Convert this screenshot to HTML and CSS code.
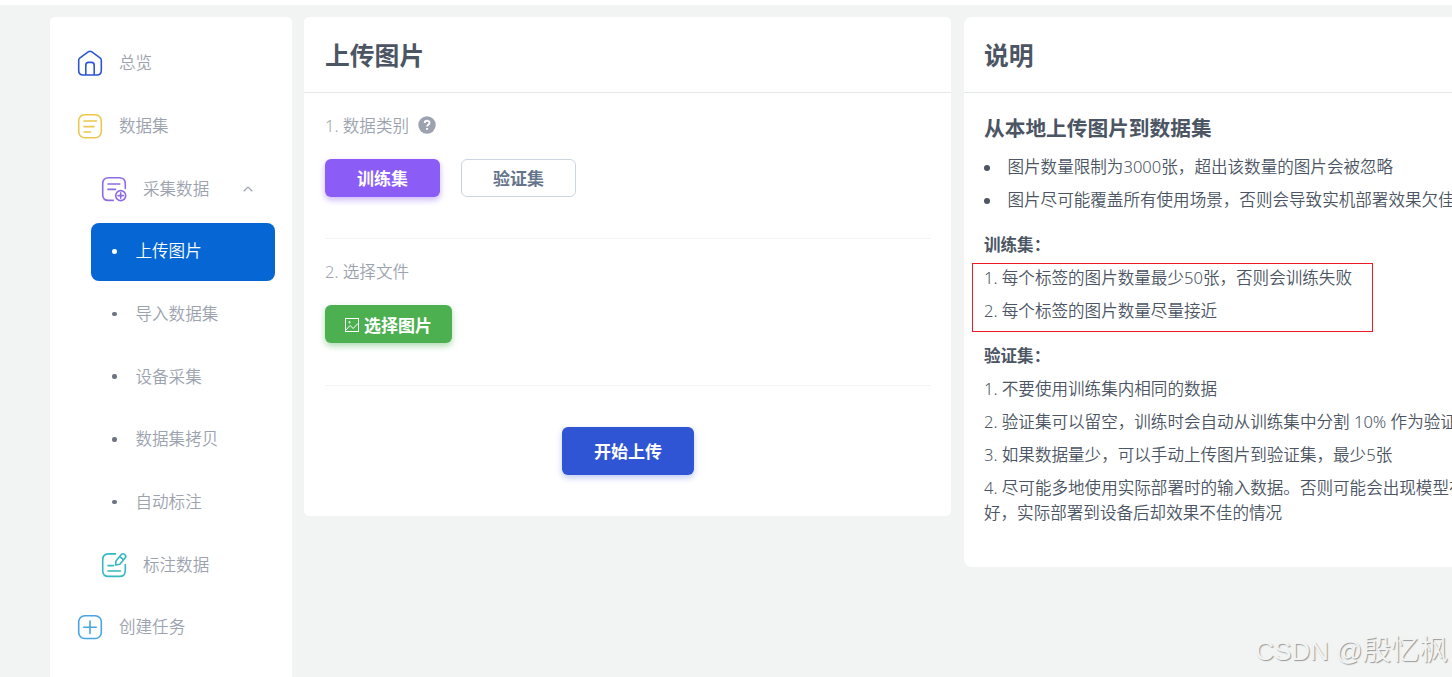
FILE: index.html
```html
<!DOCTYPE html>
<html lang="zh-CN">

<head>
	<meta charset="utf-8">
	<title>上传图片</title>
	<meta name="viewport" content="width=device-width, initial-scale=1">
	<link rel="stylesheet" href="styles.css">
</head>

<body>
	<div class="page">
		<nav class="sidebar">
			<a class="item">
				<svg class="icon home" viewBox="0 0 26 26"><path d="M1.7 10.2Q1.7 9 2.7 8.2L11.5 1.7Q13 .8 14.5 1.7L23.3 8.2Q24.3 9 24.3 10.2V20.5Q24.3 25 19.8 25H6.2Q1.7 25 1.7 20.5ZM8.8 25V15.2Q8.8 12.4 11.5 12.4H14.5Q17.2 12.4 17.2 15.2V25" /></svg>
				<span>总览</span>
			</a>
			<a class="item">
				<svg class="icon data" viewBox="0 0 26 26"><rect x="1.7" y="1.7" width="22.6" height="23" rx="6" /><path d="M7 8H19.5M7 13.6H17M7 19H13.5" /></svg>
				<span>数据集</span>
			</a>
			<a class="item sub">
				<svg class="icon collect" viewBox="0 0 26 26"><path d="M12.2 24.4H7.7Q1.7 24.4 1.7 18.4V7.7Q1.7 1.7 7.7 1.7H18.3Q24.3 1.7 24.3 7.7V12.5M7 8H18.8M7 13.4H14.5" /><circle cx="19.7" cy="19.6" r="5" /><path d="M17 19.6H22.4M19.7 16.9V22.3" /></svg>
				<span>采集数据</span>
				<svg class="arrow" viewBox="0 0 10 6"><path d="M.7 5.2 5 1 9.3 5.2" /></svg>
			</a>
			<a class="item leaf active"><i class="dot"></i><span>上传图片</span></a>
			<a class="item leaf"><i class="dot"></i><span>导入数据集</span></a>
			<a class="item leaf"><i class="dot"></i><span>设备采集</span></a>
			<a class="item leaf"><i class="dot"></i><span>数据集拷贝</span></a>
			<a class="item leaf"><i class="dot"></i><span>自动标注</span></a>
			<a class="item sub">
				<svg class="icon label" viewBox="0 0 26 26"><path d="M14.5 1.9H7.7Q1.7 1.9 1.7 7.9V18.4Q1.7 24.4 7.7 24.4H18.3Q24.3 24.4 24.3 18.4V12.5M7 13.6H12.5M7 19H19.5" /><path d="M14.6 13 15 9 20.3 2.5Q21.6 1 23.5 2.4 25.6 4.1 24.3 5.8L18.9 12.2ZM18.8 4.7 22.3 7.7" /></svg>
				<span>标注数据</span>
			</a>
			<a class="item">
				<svg class="icon task" viewBox="0 0 26 26"><rect x="1.7" y="1.7" width="22.6" height="22.8" rx="6" /><path d="M13 7V19.5M6.7 13.3H19.3" /></svg>
				<span>创建任务</span>
			</a>
		</nav>

		<main class="card upload">
			<h1>上传图片</h1>
			<div class="content">
				<section class="step">
					<div class="step-name">1. 数据类别
						<svg class="help" viewBox="0 0 18 18"><circle cx="9" cy="9" r="8.7" /><path d="M6.7 7.1C6.7 3.9 11.5 4 11.5 6.9 11.5 8.8 9.1 8.7 9.1 10.6M9.1 12.1V13.8" /></svg>
					</div>
					<div class="buttons">
						<button class="btn purple">训练集</button>
						<button class="btn outline">验证集</button>
					</div>
				</section>
				<section class="step">
					<div class="step-name">2. 选择文件</div>
					<div class="buttons">
						<button class="btn green">
							<svg class="picture" viewBox="0 0 14 14"><rect x=".5" y=".5" width="13" height="13" /><path d="M1 12 5 7.5 8.2 10.5 12.9 5.5" /><circle cx="4.5" cy="4.2" r=".7" /></svg>
							选择图片
						</button>
					</div>
				</section>
				<div class="submit">
					<button class="btn blue">开始上传</button>
				</div>
			</div>
		</main>

		<aside class="card help-card">
			<h1>说明</h1>
			<div class="content">
				<h2>从本地上传图片到数据集</h2>
				<ul>
					<li>图片数量限制为3000张，超出该数量的图片会被忽略</li>
					<li>图片尽可能覆盖所有使用场景，否则会导致实机部署效果欠佳</li>
				</ul>
				<h3>训练集：</h3>
				<div class="marked">
					<p>1. 每个标签的图片数量最少50张，否则会训练失败</p>
					<p>2. 每个标签的图片数量尽量接近</p>
				</div>
				<h3>验证集：</h3>
				<p>1. 不要使用训练集内相同的数据</p>
				<p>2. 验证集可以留空，训练时会自动从训练集中分割 10% 作为验证</p>
				<p>3. 如果数据量少，可以手动上传图片到验证集，最少5张</p>
				<p>4. 尽可能多地使用实际部署时的输入数据。否则可能会出现模型在<br>好，实际部署到设备后却效果不佳的情况</p>
			</div>
		</aside>
	</div>
	<div class="watermark"><span>CSDN @</span>殷忆枫</div>
</body>

</html>
```

FILE: styles.css
```css
* {
	box-sizing: border-box;
}

body {
	margin: 0;
	height: 677px;
	overflow: hidden;
	position: relative;
	border-top: 5px solid white;
	background: #f2f4f4;
	color: #4b5563;
	font-family: "Noto Sans", "Noto Sans CJK SC", sans-serif;
	font-size: 16.57px;
	font-weight: 350;
}

.page {
	display: grid;
	grid-template-columns: 242px 647px 1fr;
	column-gap: 12px;
	align-items: start;
	padding: 12px 0 0 50px;
}

/* sidebar */
.sidebar {
	height: 680px;
	padding: 18px 17px 0 27px;
	display: flex;
	flex-direction: column;
	gap: 4.7px;
	background: white;
	border-radius: 5px 5px 0 0;
	color: #9ca3af;
}

.item {
	height: 58px;
	padding-bottom: 1.5px;
	flex: none;
	display: flex;
	align-items: center;
	gap: 16px;
}

.item span {
	line-height: 24px;
}

.sub {
	padding-left: 24px;
}

.leaf {
	margin-left: 14px;
	padding-left: 21px;
	gap: 19px;
	border-radius: 8px;
}

.active {
	background: #0666d3;
	color: white;
}

.dot {
	width: 4.5px;
	height: 4.5px;
	border-radius: 50%;
	background: #6b7280;
}

.active .dot {
	background: white;
}

svg {
	fill: none;
	stroke: currentColor;
	flex: none;
}

.icon {
	width: 26px;
	height: 26px;
	stroke-width: 1.6;
	stroke-linecap: round;
	stroke-linejoin: round;
}

.home {
	color: #2f55d4;
}

.data {
	color: #e9c84b;
}

.collect {
	color: #8e6be0;
}

.label {
	color: #35b8c0;
}

.task {
	color: #46a5e5;
}

.arrow {
	width: 10px;
	height: 6px;
	margin-left: 18px;
	stroke-width: 1.2;
}

/* cards */
.card {
	background: white;
	border-radius: 5px;
}

h1 {
	margin: 0;
	height: 76px;
	padding: 0 21px;
	border-bottom: 1px solid #e5e7eb;
	font-size: 24.8px;
	font-weight: 700;
	line-height: 76px;
}

.upload {
	height: 499px;
}

.upload .content {
	padding: 0 20px 0 21px;
}

.step {
	height: 147px;
	padding-top: 19px;
	border-bottom: 1px solid #f3f4f6;
}

.step:first-child {
	height: 146px;
}

.step-name {
	display: flex;
	align-items: center;
	gap: 8.5px;
	height: 25px;
	color: #9ca3af;
}

.help {
	width: 18px;
	height: 18px;
	margin-top: 1px;
	stroke: white;
	stroke-width: 1.9;
}

.help circle {
	fill: #9ca3af;
	stroke: none;
}

.buttons {
	display: flex;
	gap: 21px;
	padding-top: 22px;
}

.btn {
	width: 115px;
	height: 38px;
	padding: 0 0 2px;
	display: flex;
	align-items: center;
	justify-content: center;
	gap: 5px;
	border: none;
	border-radius: 6px;
	color: white;
	font-family: inherit;
	font-size: 17px;
	font-weight: 700;
}

.purple {
	background: #8b5cf6;
	box-shadow: 0 3px 6px rgba(139, 92, 246, .45);
}

.outline {
	background: white;
	border: 1px solid #cbd5e1;
	color: #64748b;
}

.green {
	width: 127px;
	padding: 0;
	background: #4caf50;
	box-shadow: 0 3px 6px rgba(76, 175, 80, .45);
}

.picture {
	width: 14px;
	height: 14px;
	margin-top: 2px;
}

.submit {
	display: flex;
	justify-content: center;
	padding-top: 41px;
}

.blue {
	width: 132px;
	height: 48px;
	background: #2f55d4;
	box-shadow: 0 3px 6px rgba(47, 85, 212, .3);
}

/* help text */
.help-card {
	height: 550px;
	margin-left: 1px;
	border-radius: 8px 0 0 8px;
	overflow: hidden;
	white-space: nowrap;
}

.help-card h1 {
	padding-left: 20px;
}

.help-card .content {
	padding: 18px 0 0 20px;
}

h2 {
	margin: 0 0 9px;
	font-size: 20.7px;
	line-height: 34px;
}

ul {
	margin: 0;
	padding: 0;
	list-style: none;
}

li,
p {
	margin: 0 0 8px;
	line-height: 25px;
}

li {
	display: flex;
	align-items: center;
	gap: 17.5px;
}

li::before {
	content: "";
	flex: none;
	width: 6px;
	height: 6px;
	margin-top: 2px;
	border-radius: 50%;
	background: #4b5563;
}

h3 {
	margin: 20px 0 8px;
	font-size: 16.57px;
	line-height: 25px;
}

.marked {
	position: relative;
}

.marked::before {
	content: "";
	position: absolute;
	left: -12px;
	top: -2px;
	width: 399px;
	height: 67px;
	border: 1px solid #ed1c24;
}

.watermark {
	position: absolute;
	right: 4px;
	bottom: 6px;
	color: #f2f4f4;
	font-family: "Liberation Sans", "Noto Sans CJK SC", sans-serif;
	font-size: 28.5px;
	line-height: 40px;
	text-shadow: 1px 1px 1px #999;
}

.watermark span {
	font-size: 26px;
}
```
